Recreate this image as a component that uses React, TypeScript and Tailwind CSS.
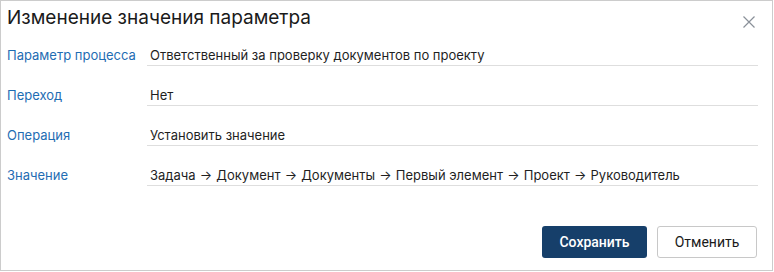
import React from 'react';

interface FieldRowProps {
    label: string;
    value: React.ReactNode;
}

const FieldRow: React.FC<FieldRowProps> = ({ label, value }) => (
    <div className="flex items-end h-[40px]">
        <div className="w-[146px] pl-[6px] mb-[1px] text-[13px] leading-[20px] text-[#1f6db3]">{label}</div>
        <div className="flex-1 mr-[14px] pl-[3px] text-[13px] leading-[20px] text-[#1f1f1f] border-b border-[#dedede]">
            {value}
        </div>
    </div>
);

const path = ['Задача', 'Документ', 'Документы', 'Первый элемент', 'Проект', 'Руководитель'];

const pathValue = path.map((p, i) => (
    <React.Fragment key={p}>
        {i > 0 && (
            <>
                {' '}
                <span className="px-[0.5px]">→</span>{' '}
            </>
        )}
        {p}
    </React.Fragment>
));

const rows: FieldRowProps[] = [
    { label: 'Параметр процесса', value: 'Ответственный за проверку документов по проекту' },
    { label: 'Переход', value: 'Нет' },
    { label: 'Операция', value: 'Установить значение' },
    { label: 'Значение', value: pathValue },
];

export default function App() {
    return (
        <div
            className="w-[773px] h-[271px] bg-white border border-[#cccccc] flex flex-col"
            style={{ fontFamily: 'Inter, "Noto Sans", sans-serif' }}
        >
            {/* Заголовок */}
            <div className="relative h-[25px] pl-[6px] pt-[5px]">
                <h1 className="text-[19px] leading-[24px] text-[#1a1a1a]">Изменение значения параметра</h1>
                <button className="absolute right-[16px] top-[14px] w-[14px] h-[14px] flex items-center justify-center">
                    <svg width="12" height="12" viewBox="0 0 12 12" fill="none">
                        <path d="M0.5 0.5L11.5 11.5M11.5 0.5L0.5 11.5" stroke="#8a9099" strokeWidth="1.2" />
                    </svg>
                </button>
            </div>

            {/* Поля */}
            {rows.map((r) => (
                <FieldRow key={r.label} label={r.label} value={r.value} />
            ))}

            {/* Кнопки */}
            <div
                className="flex justify-end gap-[10px] mt-[40px] pr-[15px]"
                style={{ fontFamily: 'Roboto, "Liberation Sans", sans-serif' }}
            >
                <button className="w-[105px] h-[32px] rounded-[3px] bg-[#163f6a] text-white text-[14px] font-medium">
                    Сохранить
                </button>
                <button className="w-[100px] h-[32px] rounded-[3px] bg-white border border-[#c8c8c8] text-[#1a1a1a] text-[14px]">
                    Отменить
                </button>
            </div>
        </div>
    );
}
